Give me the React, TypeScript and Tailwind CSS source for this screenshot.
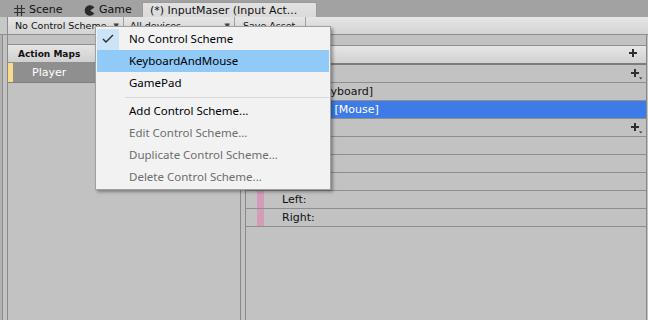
import React from "react";

const uni = "font-['DejaVu_Sans',sans-serif]";
const win = "font-['Noto_Sans',sans-serif]";

function Plus({ drop = false }: { drop?: boolean }) {
  return (
    <svg width="12" height="11" viewBox="0 0 12 11" className="shrink-0">
      <path d="M3 0h2v3h3v2H5v3H3V5H0V3h3z" fill="#2e2e2e" />
      {drop && <path d="M8 8.5h3.5l-1.75 1.8z" fill="#2e2e2e" />}
    </svg>
  );
}

function SceneIcon() {
  return (
    <svg width="11" height="11" viewBox="0 0 11 11" className="shrink-0">
      <path d="M3.5 0v11M7.5 0v11M0 3.5h11M0 7.5h11" stroke="#333" strokeWidth="1.2" />
    </svg>
  );
}

function GameIcon() {
  return (
    <svg width="12" height="11" viewBox="0 0 12 11" className="shrink-0">
      <path d="M10.4 2.6A5.3 5.3 0 1 0 10.4 8.4L6.2 5.5z" fill="#2a2a2a" />
    </svg>
  );
}

function Toolbar() {
  return (
    <div className={`h-[18px] flex border-b border-[#8f8f8f] bg-gradient-to-b from-[#e6e6e6] to-[#d3d3d3] ${uni} text-[9.5px] text-[#111]`}>
      <div className="w-[8px] border-r border-[#8a8a8a] bg-[#c8c8c8]" />
      <div className="w-[116px] flex items-center justify-between pl-[7px] pr-[4px] pt-[2px] border-r border-[#a0a0a0]">
        <span className="whitespace-nowrap overflow-hidden">No Control Scheme</span>
        <span className="text-[7px] text-[#444]">▼</span>
      </div>
      <div className="w-[111px] flex items-center justify-between pl-[6px] pr-[4px] pt-[2px] border-r border-[#a0a0a0]">
        <span className="whitespace-nowrap">All devices</span>
        <span className="text-[7px] text-[#444]">▼</span>
      </div>
      <div className="w-[71px] flex items-center pl-[8px] pt-[2px] border-r border-[#a0a0a0] whitespace-nowrap">Save Asset</div>
      <div className="flex-1" />
    </div>
  );
}

type Row = { text: string; pad: number; plus?: boolean; selected?: boolean; comp?: boolean };

const rows: Row[] = [
  { text: "▼ Move", pad: 14, plus: true },
  { text: "Escape [Keyboard]", pad: 24 },
  { text: "Left Button [Mouse]", pad: 24, selected: true },
  { text: "▼ Look", pad: 14, plus: true },
  { text: "2D Vector", pad: 30 },
  { text: "Up:", pad: 36, comp: true },
  { text: "Down:", pad: 36, comp: true },
  { text: "Left:", pad: 36, comp: true },
  { text: "Right:", pad: 36, comp: true },
];

function Menu() {
  const items: { label: string; checked?: boolean; hot?: boolean }[] = [
    { label: "No Control Scheme", checked: true },
    { label: "KeyboardAndMouse", hot: true },
    { label: "GamePad" },
  ];
  const items2 = [
    { label: "Add Control Scheme...", disabled: false },
    { label: "Edit Control Scheme...", disabled: true },
    { label: "Duplicate Control Scheme...", disabled: true },
    { label: "Delete Control Scheme...", disabled: true },
  ];
  return (
    <div className={`absolute left-[95px] top-[26px] w-[236px] bg-[#f2f2f2] border border-[#a0a0a0] p-[1px] shadow-[2px_2px_3px_rgba(0,0,0,0.35)] ${win} text-[11.5px]`}>
      {items.map((it) => (
        <div key={it.label} className={`h-[22px] flex items-center ${it.hot ? "bg-[#91c9f7]" : ""}`}>
          <div className={`w-[22px] h-[21px] flex items-center justify-center ${it.checked ? "bg-[#cce4f7]" : ""}`}>
            {it.checked && (
              <svg width="12" height="10" viewBox="0 0 12 10">
                <path d="M1 5l3 3 7-7" stroke="#2b2b2b" strokeWidth="1.4" fill="none" />
              </svg>
            )}
          </div>
          <span className="pl-[10px] text-[#000]">{it.label}</span>
        </div>
      ))}
      <div className="h-[6px] flex items-center pl-[28px]">
        <div className="h-px w-full bg-[#d7d7d7]" />
      </div>
      {items2.map((it) => (
        <div key={it.label} className="h-[22px] flex items-center">
          <span className={`pl-[32px] ${it.disabled ? "text-[#6d6d6d]" : "text-[#000]"}`}>{it.label}</span>
        </div>
      ))}
    </div>
  );
}

export default function App() {
  return (
    <div className={`relative w-[648px] h-[320px] overflow-hidden flex flex-col bg-[#c2c2c2] ${uni}`}>
      {/* Tabs */}
      <div className="h-[17px] flex items-end bg-[#a2a2a2] text-[11px] text-[#111]">
        <div className="w-[76px] h-[15px] flex items-center gap-[4px] pl-[14px] pt-[2px]">
          <SceneIcon />
          <span>Scene</span>
        </div>
        <div className="w-[66px] h-[15px] flex items-center gap-[3px] pl-[8px] pt-[2px]">
          <GameIcon />
          <span>Game</span>
        </div>
        <div className="w-[175px] h-[15px] flex items-center pl-[7px] pt-[2px] bg-gradient-to-b from-[#e2e2e2] to-[#dadada] border border-b-0 border-[#9a9a9a] rounded-t-[2px] whitespace-nowrap">
          (*) InputMaser (Input Act...
        </div>
      </div>

      <Toolbar />

      {/* Body */}
      <div className="flex-1 flex">
        <div className="w-[8px] flex">
          <div className="w-[2px] bg-[#b2b2b2]" />
          <div className="w-px bg-[#8a8a8a]" />
          <div className="w-[4px]" />
          <div className="w-px bg-[#8a8a8a]" />
        </div>

        {/* Action maps */}
        <div className="w-[232px] pt-[9px]">
          <div className="h-[19px] flex items-center pl-[10px] pt-[2px] border-y border-[#8f8f8f] bg-gradient-to-b from-[#e4e4e4] to-[#d0d0d0] text-[9px] font-bold text-[#111]">
            Action Maps
          </div>
          <div className="h-[20px] flex items-center bg-[#8f8f8f] border-b border-[#7f7f7f]">
            <div className="w-[5px] h-full bg-[#f8dc8c]" />
            <span className="pl-[19px] pt-[1px] text-[11px] text-white">Player</span>
          </div>
        </div>

        <div className="w-[6px] border-x border-[#8a8a8a]" />

        {/* Actions */}
        <div className="w-[400px] pt-[10px]">
          <div className="h-[20px] flex items-center justify-end pr-[5px] border-t border-[#8f8f8f] border-b-2 border-b-[#7c7c7c] bg-gradient-to-b from-[#e6e6e6] to-[#d1d1d1]">
            <Plus />
          </div>
          {rows.map((r) => (
            <div
              key={r.text}
              className={`h-[18px] flex items-center border-b border-[#8e8e8e] text-[11px] ${r.selected ? "bg-[#3d7be6] text-white" : "text-[#111]"}`}
            >
              <div className="w-[11px]" />
              <div className={`w-[7px] h-full ${r.comp ? "bg-[#d49cb9]" : ""}`} />
              <span className="flex-1 whitespace-nowrap pt-[1px]" style={{ paddingLeft: r.pad - 18 }}>
                {r.text}
              </span>
              {r.plus && (
                <div className="pr-[3px] pt-[1px]">
                  <Plus drop />
                </div>
              )}
            </div>
          ))}
        </div>

        <div className="w-[2px] border-l border-[#8a8a8a]" />
      </div>

      <Menu />
    </div>
  );
}
